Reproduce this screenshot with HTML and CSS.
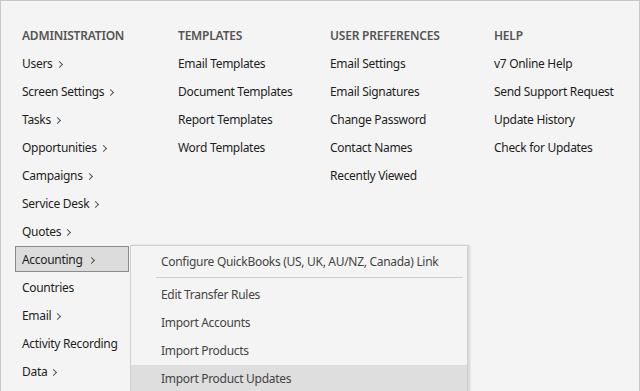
FILE: index.html
```html
<!DOCTYPE html>
<html lang="en">
<head>
    <meta charset="UTF-8">
    <title>Settings Menu</title>
    <link rel="stylesheet" href="styles.css">
</head>
<body>
<div class="panel">
    <div class="column col-admin">
        <h3>ADMINISTRATION</h3>
        <ul>
            <li class="item has-sub">Users</li>
            <li class="item has-sub">Screen Settings</li>
            <li class="item has-sub">Tasks</li>
            <li class="item has-sub">Opportunities</li>
            <li class="item has-sub">Campaigns</li>
            <li class="item has-sub">Service Desk</li>
            <li class="item has-sub">Quotes</li>
            <li class="item has-sub active">Accounting
                <div class="flyout">
                    <div class="fly-item">Configure QuickBooks (US, UK, AU/NZ, Canada) Link</div>
                    <div class="fly-sep"></div>
                    <div class="fly-item">Edit Transfer Rules</div>
                    <div class="fly-item">Import Accounts</div>
                    <div class="fly-item">Import Products</div>
                    <div class="fly-item hover">Import Product Updates</div>
                </div>
            </li>
            <li class="item">Countries</li>
            <li class="item has-sub">Email</li>
            <li class="item">Activity Recording</li>
            <li class="item has-sub">Data</li>
        </ul>
    </div>
    <div class="column col-templates">
        <h3>TEMPLATES</h3>
        <ul>
            <li class="item">Email Templates</li>
            <li class="item">Document Templates</li>
            <li class="item">Report Templates</li>
            <li class="item">Word Templates</li>
        </ul>
    </div>
    <div class="column col-prefs">
        <h3>USER PREFERENCES</h3>
        <ul>
            <li class="item">Email Settings</li>
            <li class="item">Email Signatures</li>
            <li class="item">Change Password</li>
            <li class="item">Contact Names</li>
            <li class="item">Recently Viewed</li>
        </ul>
    </div>
    <div class="column col-help">
        <h3>HELP</h3>
        <ul>
            <li class="item">v7 Online Help</li>
            <li class="item">Send Support Request</li>
            <li class="item">Update History</li>
            <li class="item">Check for Updates</li>
        </ul>
    </div>
</div>
</body>
</html>
```

FILE: styles.css
```css
html, body {
    margin: 0;
    height: 100%;
    overflow: hidden;
}

body {
    background: #f4f4f4;
    font-family: 'Noto Sans', 'Open Sans', sans-serif;
    font-size: 12px;
    color: #1e1e1e;
}

/* Panel principal con borde gris */
.panel {
    box-sizing: border-box;
    height: 100%;
    border: 1px solid #c8c8c8;
    border-bottom: none;
    padding: 20px 0 0 21px;
    display: grid;
    grid-template-columns: 156px 152px 164px 1fr;
}

h3 {
    margin: 0;
    height: 28px;
    line-height: 30px;
    font-size: 12px;
    font-weight: 600;
    color: #555;
    letter-spacing: -0.2px;
}

ul {
    list-style: none;
    margin: 0;
    padding: 0;
}

.item {
    position: relative;
    height: 28px;
    line-height: 28px;
    box-sizing: border-box;
    margin-left: -7px;
    padding: 0 6px;
    border: 1px solid transparent;
    white-space: nowrap;
    letter-spacing: -0.3px;
}

    .item.has-sub::after {
        content: '';
        display: inline-block;
        width: 4px;
        height: 4px;
        margin-left: 4px;
        border-top: 1.3px solid #555;
        border-right: 1.3px solid #555;
        transform: translateY(-1px) rotate(45deg);
    }

    .item.active {
        width: 114px;
        height: 26px;
        margin-top: 1px;
        margin-bottom: 1px;
        line-height: 26px;
        background: #dcdcdc;
        border-color: #8a8a8a;
    }

/* Submenú desplegable */
.flyout {
    position: absolute;
    left: 114px;
    top: -2px;
    width: 336px;
    height: 160px;
    background: #f4f4f4;
    border: 1px solid #cfcfcf;
    border-bottom: none;
    box-shadow: 2px 0 2px rgba(0, 0, 0, 0.12);
    padding-top: 2px;
    color: #444;
    line-height: 28px;
    z-index: 2;
}

.fly-item {
    height: 28px;
    padding-left: 30px;
}

    .fly-item.hover {
        background: #dedede;
    }

.fly-sep {
    height: 1px;
    margin: 1px 4px 3px 25px;
    background: #cfcfcf;
}
```
